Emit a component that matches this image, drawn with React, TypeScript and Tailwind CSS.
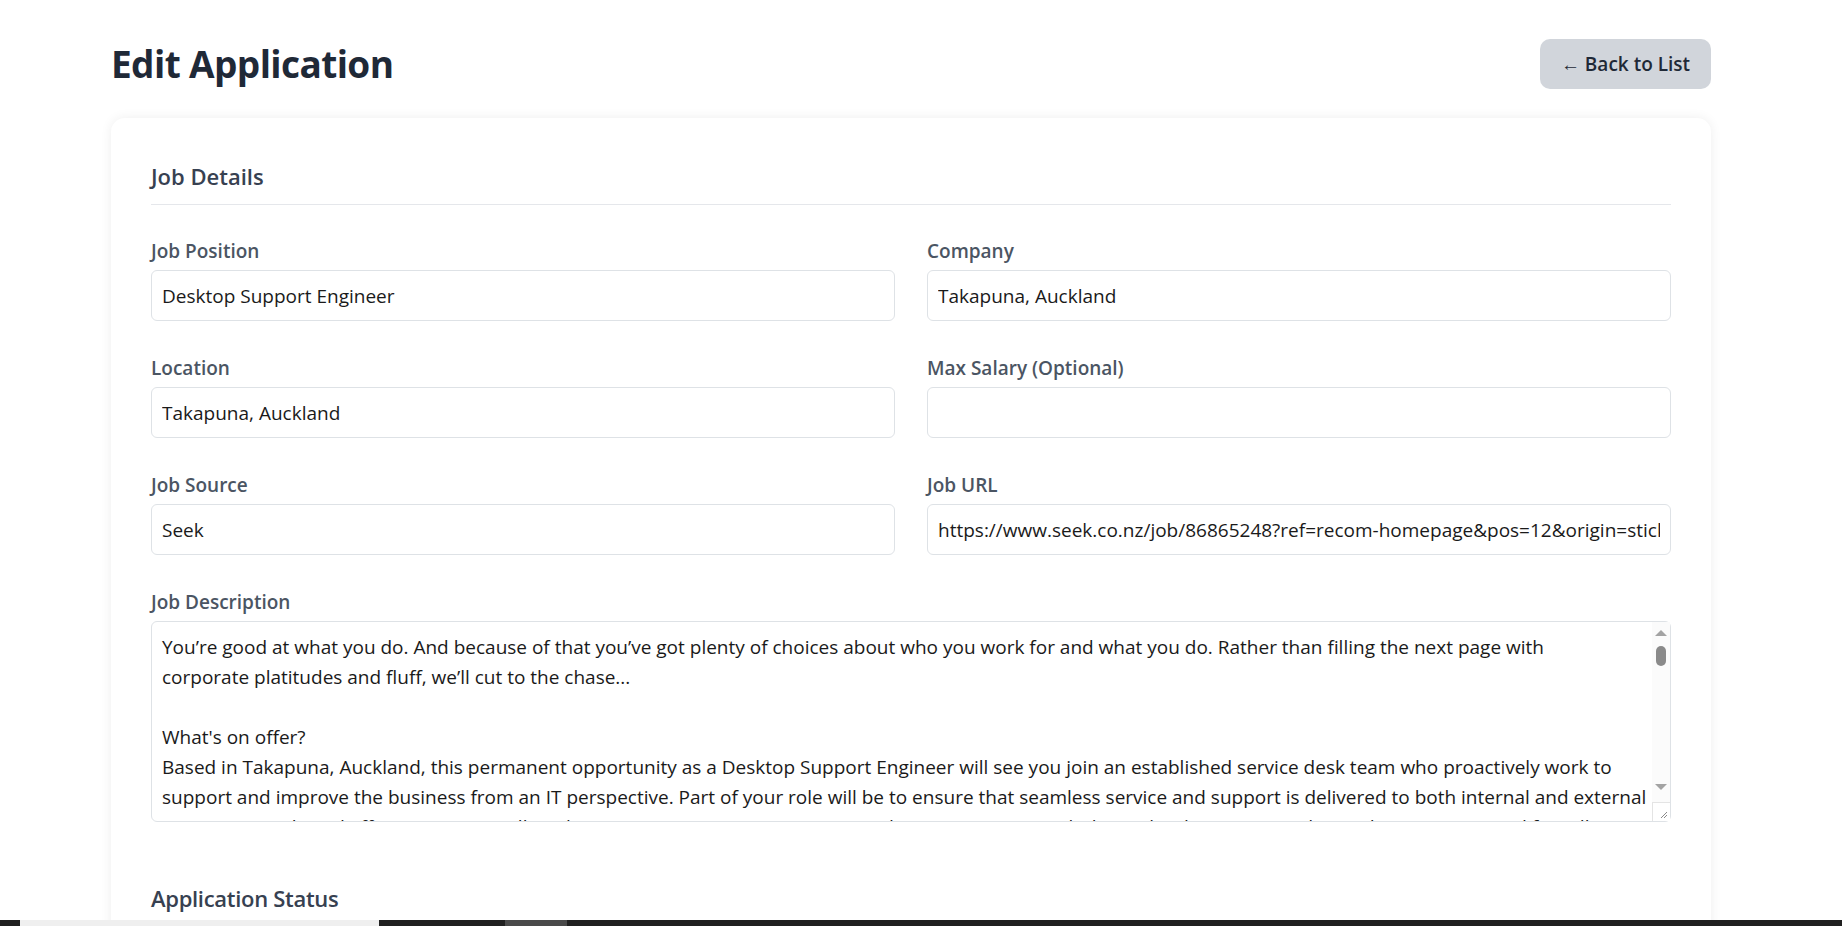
import React from "react"

const description = [
  "You’re good at what you do. And because of that you’ve got plenty of choices about who you work for and what you do. Rather than filling the next page with",
  "corporate platitudes and fluff, we’ll cut to the chase...",
  "",
  "What's on offer?",
  "Based in Takapuna, Auckland, this permanent opportunity as a Desktop Support Engineer will see you join an established service desk team who proactively work to",
  "support and improve the business from an IT perspective. Part of your role will be to ensure that seamless service and support is delivered to both internal and external",
  "users in a timely and efficient manner. All Desktop Support Engineers are expected to “Keep Peace” with the Technology Team and provide a proactive and friendly service",
  "to everyone in the business.",
].join("\n")

function Field({ label, value }: { label: string; value: string }) {
  return (
    <div className="flex flex-col">
      <label className="mb-[5px] text-[19px] leading-[28px] font-semibold text-[#4b5563]">{label}</label>
      <input
        readOnly
        defaultValue={value}
        className="h-[51px] w-full rounded-md border border-[#dee2e6] bg-white px-[10px] text-[19px] text-[#1a1a1a] outline-none"
      />
    </div>
  )
}

function FakeScrollbar() {
  return (
    <div className="pointer-events-none absolute top-px right-px bottom-px flex w-[18px] flex-col items-center bg-[#fbfbfb]">
      {/* up arrow */}
      <div className="mt-[8px] h-0 w-0 border-x-[6px] border-b-[6px] border-x-transparent border-b-[#a3a3a3]" />
      {/* thumb */}
      <div className="mt-[10px] h-[20px] w-[10px] rounded-full bg-[#8a8a8a]" />
      <div className="flex-1" />
      {/* down arrow */}
      <div className="mb-[12px] h-0 w-0 border-x-[6px] border-t-[6px] border-x-transparent border-t-[#a3a3a3]" />
      {/* resize grip */}
      <div className="relative h-[19px] w-[18px] border-t border-l border-[#e4e4e4] bg-white">
        <svg className="absolute right-[2px] bottom-[2px]" width="9" height="9" viewBox="0 0 9 9">
          <path d="M8 2 L2 8 M8 5 L5 8" stroke="#8a8a8a" strokeWidth="1" />
        </svg>
      </div>
    </div>
  )
}

export default function App() {
  return (
    <div className="min-h-screen bg-white font-['Open_Sans',sans-serif]">
      <div className="ml-[111px] w-[1600px] pt-[39px]">
        {/* Header */}
        <div className="flex h-[50px] items-center justify-between">
          <h1 className="text-[37px] leading-[50px] font-bold tracking-[-0.6px] text-[#1f2937]">Edit Application</h1>
          <button className="h-[50px] w-[171px] rounded-[10px] bg-[#d1d5db] text-[19px] font-semibold text-[#1f2937]">
            ← Back to List
          </button>
        </div>

        {/* Card */}
        <div className="mt-[29px] rounded-[14px] bg-white px-[40px] pt-[40px] pb-[60px] shadow-[0_0_12px_rgba(0,0,0,0.07)]">
          <h2 className="border-b border-[#e5e7eb] pb-[10px] text-[22px] leading-[36px] font-semibold text-[#374151]">
            Job Details
          </h2>

          <div className="mt-[32px] grid grid-cols-2 gap-x-[32px] gap-y-[33px]">
            <Field label="Job Position" value="Desktop Support Engineer" />
            <Field label="Company" value="Takapuna, Auckland" />
            <Field label="Location" value="Takapuna, Auckland" />
            <Field label="Max Salary (Optional)" value="" />
            <Field label="Job Source" value="Seek" />
            <Field
              label="Job URL"
              value="https://www.seek.co.nz/job/86865248?ref=recom-homepage&pos=12&origin=sticky"
            />
            <div className="col-span-2 flex flex-col">
              <label className="mb-[5px] text-[19px] leading-[28px] font-semibold text-[#4b5563]">
                Job Description
              </label>
              <div className="relative">
                <textarea
                  readOnly
                  wrap="off"
                  defaultValue={description}
                  className="block h-[201px] w-full resize-none overflow-hidden rounded-md border border-[#dee2e6] bg-white py-[10px] pr-[28px] pl-[10px] text-[19px] leading-[30px] whitespace-pre text-[#1a1a1a] outline-none"
                />
                <FakeScrollbar />
              </div>
            </div>
          </div>

          <h2 className="mt-[58px] text-[22px] leading-[36px] font-semibold tracking-[-0.3px] text-[#374151]">
            Application Status
          </h2>
          <div className="h-[200px]" />
        </div>
      </div>

      {/* bottom taskbar strip */}
      <div className="fixed right-0 bottom-0 left-0 flex h-[6px] bg-[#202020]">
        <div className="w-[20px]" />
        <div className="w-[359px] bg-[#efefef]" />
        <div className="w-[126px]" />
        <div className="w-[62px] bg-[#4a4a4a]" />
      </div>
    </div>
  )
}
